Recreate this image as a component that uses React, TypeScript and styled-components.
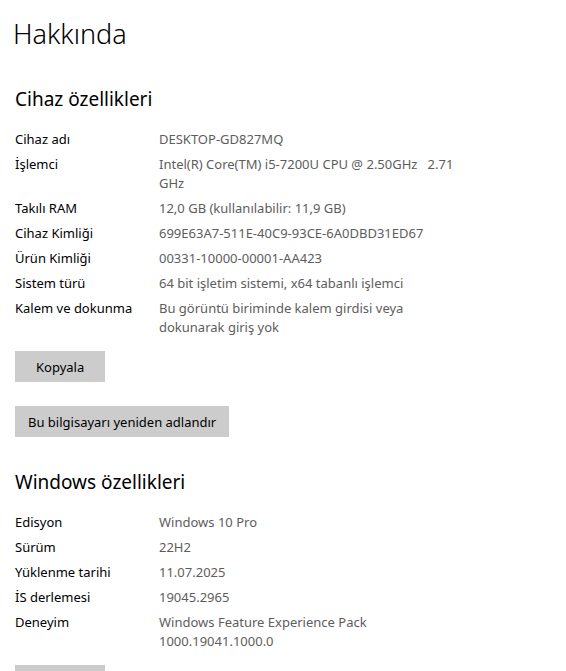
import React from "react";
import styled, { createGlobalStyle } from "styled-components";

const Global = createGlobalStyle`
  html, body { margin: 0; padding: 0; background: #fff; }
  body { font-family: "Segoe UI", "Noto Sans", "Open Sans", sans-serif; color: #000; }
`;

const Page = styled.div`
  padding: 14px 0 0 15px;
  display: flex;
  flex-direction: column;
`;

const Title = styled.h1`
  margin: 0 0 0 -2px;
  font-size: 27px;
  font-weight: 300;
  line-height: 40px;
`;

const SectionHeading = styled.h2`
  margin: 31px 0 0 0;
  font-size: 19px;
  font-weight: 400;
  line-height: 28px;
`;

const Specs = styled.div`
  display: grid;
  grid-template-columns: 144px 306px;
  row-gap: 6px;
  margin-top: 17px;
  font-size: 13px;
  line-height: 19px;
`;

const Label = styled.div`
  color: #000;
`;

const Value = styled.div`
  color: #5d5d5d;
  white-space: pre-wrap;
`;

const Button = styled.button<{ $first?: boolean }>`
  align-self: flex-start;
  margin-top: ${(p) => (p.$first ? "14px" : "24px")};
  height: 31px;
  padding: 0 ${(p) => (p.$first ? "21px" : "13px")};
  border: none;
  background: #cccccc;
  font-family: inherit;
  font-size: 13px;
  color: #000;
`;

const device: [string, string][] = [
  ["Cihaz adı", "DESKTOP-GD827MQ"],
  ["İşlemci", "Intel(R) Core(TM) i5-7200U CPU @ 2.50GHz   2.71 GHz"],
  ["Takılı RAM", "12,0 GB (kullanılabilir: 11,9 GB)"],
  ["Cihaz Kimliği", "699E63A7-511E-40C9-93CE-6A0DBD31ED67"],
  ["Ürün Kimliği", "00331-10000-00001-AA423"],
  ["Sistem türü", "64 bit işletim sistemi, x64 tabanlı işlemci"],
  ["Kalem ve dokunma", "Bu görüntü biriminde kalem girdisi veya dokunarak giriş yok"],
];

const windows: [string, string][] = [
  ["Edisyon", "Windows 10 Pro"],
  ["Sürüm", "22H2"],
  ["Yüklenme tarihi", "11.07.2025"],
  ["İS derlemesi", "19045.2965"],
  ["Deneyim", "Windows Feature Experience Pack 1000.19041.1000.0"],
];

function SpecList({ rows }: { rows: [string, string][] }) {
  return (
    <Specs>
      {rows.map(([k, v]) => (
        <React.Fragment key={k}>
          <Label>{k}</Label>
          <Value>{v}</Value>
        </React.Fragment>
      ))}
    </Specs>
  );
}

export default function App() {
  return (
    <Page>
      <Global />
      <Title>Hakkında</Title>
      <SectionHeading>Cihaz özellikleri</SectionHeading>
      <SpecList rows={device} />
      <Button $first>Kopyala</Button>
      <Button>Bu bilgisayarı yeniden adlandır</Button>
      <SectionHeading>Windows özellikleri</SectionHeading>
      <SpecList rows={windows} />
      <Button $first>Kopyala</Button>
    </Page>
  );
}
